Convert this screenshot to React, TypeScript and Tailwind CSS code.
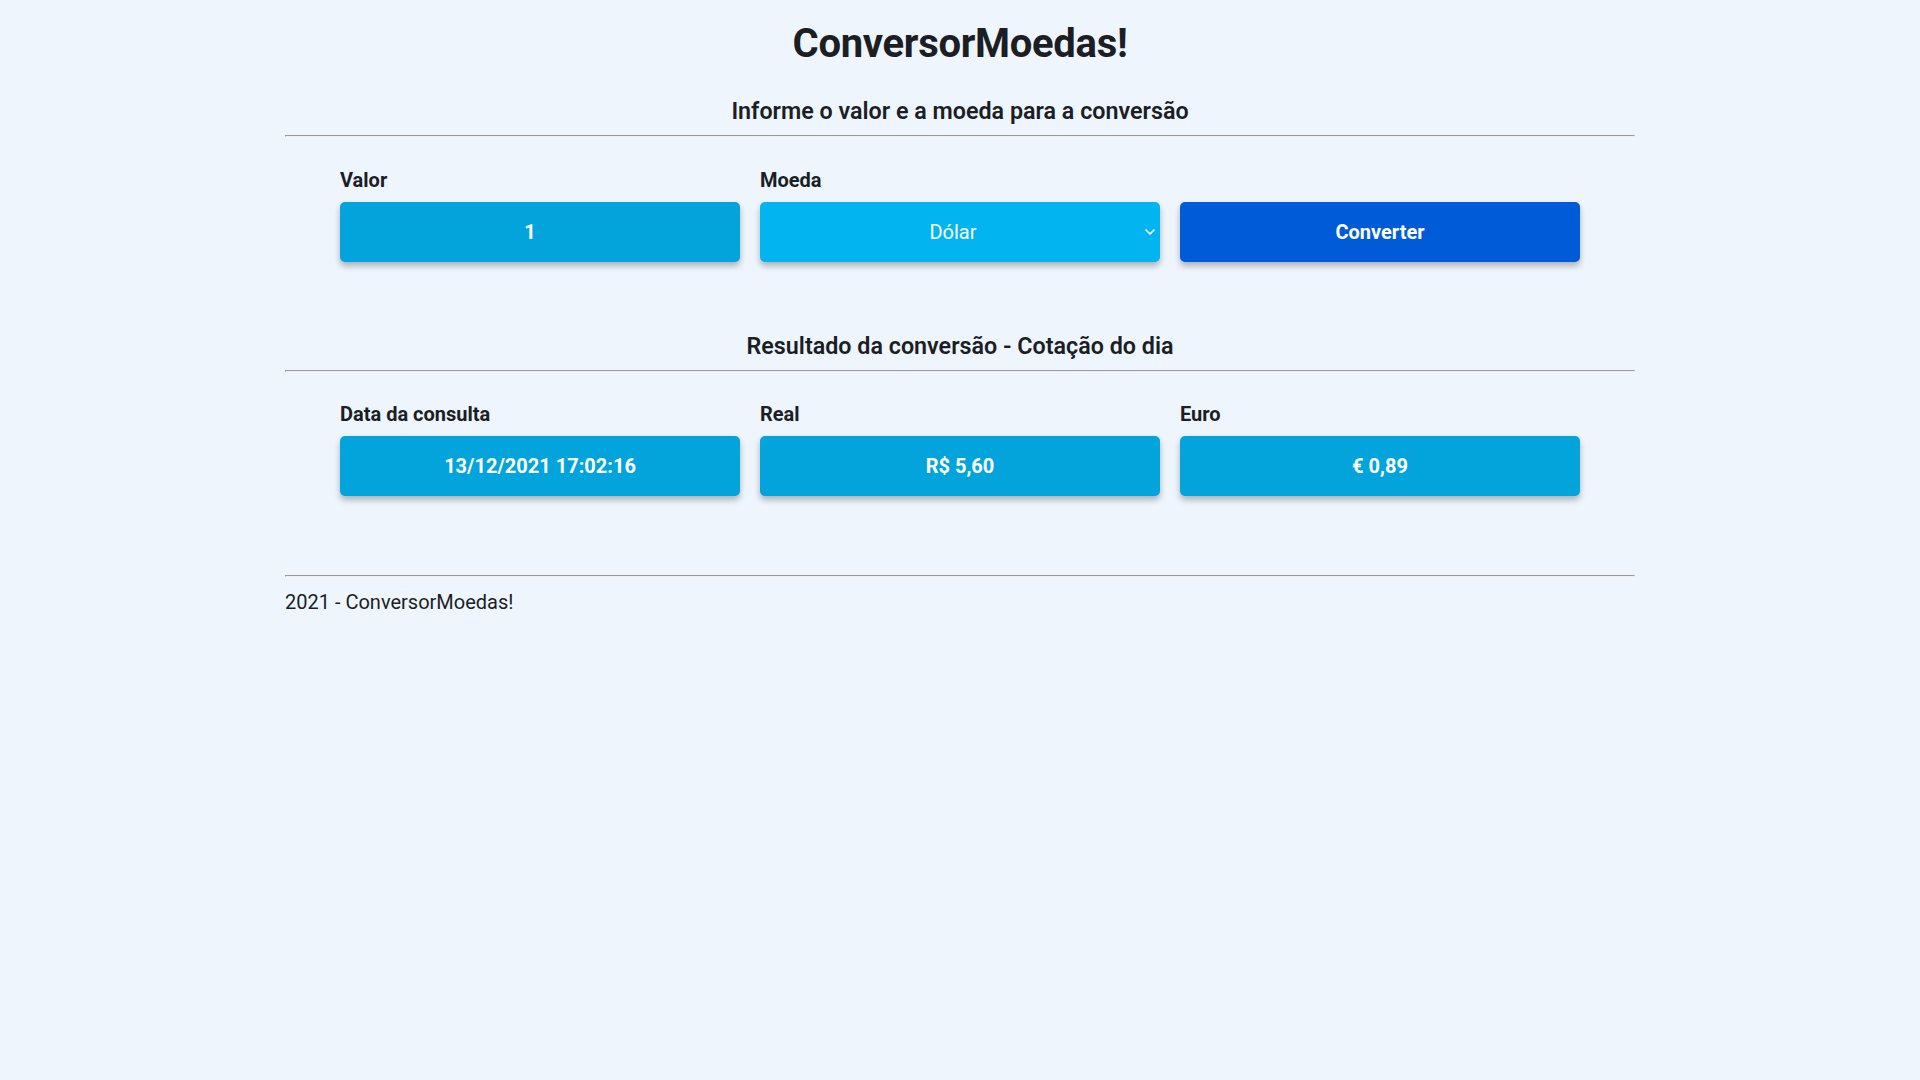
import { ChevronDown } from "lucide-react";

const font = { fontFamily: "Roboto, 'Liberation Sans', sans-serif" };

const Divider = () => (
  <div className="h-[2px] border-t border-l border-b border-r border-t-[#9b9b9b] border-l-[#9b9b9b] border-b-[#eeeeee] border-r-[#eeeeee]" />
);

const Field = ({ label, children }: { label: string; children: React.ReactNode }) => (
  <div className="flex flex-col w-[400px]">
    <label className="text-[20px] leading-[24px] font-bold text-[#1b1e24] mb-[10px]">
      {label}
    </label>
    {children}
  </div>
);

const boxClass =
  "h-[60px] rounded-[5px] flex items-center justify-center text-white text-[20px] shadow-[0_4px_6px_rgba(0,0,0,0.28)]";

const results = [
  { label: "Data da consulta", value: "13/12/2021 17:02:16" },
  { label: "Real", value: "R$ 5,60" },
  { label: "Euro", value: "€ 0,89" },
];

export default function App() {
  return (
    <div className="min-h-screen bg-[#eef5fd] text-[#1b1e24]" style={font}>
      <div className="w-[1350px] mx-auto pt-[20px]">
        <h1 className="text-[40px] leading-[48px] font-bold text-center tracking-[-0.3px]">
          ConversorMoedas!
        </h1>

        <h2 className="mt-[29px] text-[23.3px] leading-[28px] font-semibold text-center">
          Informe o valor e a moeda para a conversão
        </h2>
        <div className="mt-[10px]">
          <Divider />
        </div>

        <div className="flex justify-center gap-[20px] mt-[31px]">
          <Field label="Valor">
            <div className={`${boxClass} bg-[#03a4dc] font-bold pr-[20px]`}>1</div>
          </Field>
          <Field label="Moeda">
            <div className={`${boxClass} bg-[#02b4ef] relative`}>
              <span className="mr-[14px]">Dólar</span>
              <ChevronDown
                className="absolute right-[2px] top-1/2 -translate-y-1/2"
                size={16}
                strokeWidth={2.5}
              />
            </div>
          </Field>
          <div className="flex flex-col w-[400px] justify-end">
            <button className={`${boxClass} bg-[#005bd8] font-bold`}>Converter</button>
          </div>
        </div>

        <h2 className="mt-[70px] text-[23.3px] leading-[28px] font-semibold text-center">
          Resultado da conversão - Cotação do dia
        </h2>
        <div className="mt-[10px]">
          <Divider />
        </div>

        <div className="flex justify-center gap-[20px] mt-[30px]">
          {results.map((r) => (
            <Field key={r.label} label={r.label}>
              <div className={`${boxClass} bg-[#03a4dc] font-bold`}>{r.value}</div>
            </Field>
          ))}
        </div>

        <div className="mt-[79px]">
          <Divider />
        </div>
        <footer className="mt-[10px] text-[20px] leading-[30px]">2021 - ConversorMoedas!</footer>
      </div>
    </div>
  );
}
